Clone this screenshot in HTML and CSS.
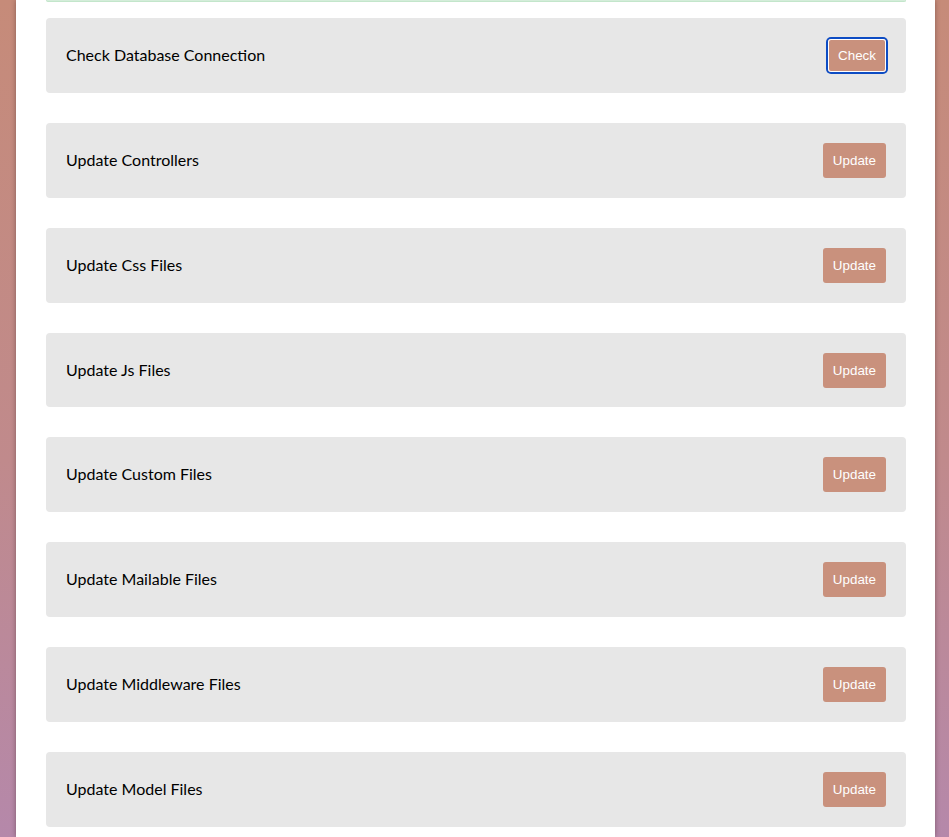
FILE: index.html
```html
<!DOCTYPE html>
<html lang="en">
<head>
<meta charset="utf-8">
<title>Updater</title>
<link rel="stylesheet" href="styles.css">
</head>
<body>
<div class="page">
  <div class="alert-success"></div>
  <div class="list">
    <div class="row"><span class="label">Check Database Connection</span><button class="btn btn-focus">Check</button></div>
    <div class="row"><span class="label">Update Controllers</span><button class="btn">Update</button></div>
    <div class="row"><span class="label">Update Css Files</span><button class="btn">Update</button></div>
    <div class="row"><span class="label">Update Js Files</span><button class="btn">Update</button></div>
    <div class="row"><span class="label">Update Custom Files</span><button class="btn">Update</button></div>
    <div class="row"><span class="label">Update Mailable Files</span><button class="btn">Update</button></div>
    <div class="row"><span class="label">Update Middleware Files</span><button class="btn">Update</button></div>
    <div class="row"><span class="label">Update Model Files</span><button class="btn">Update</button></div>
  </div>
</div>
</body>
</html>
```
FILE: styles.css
```css
html, body {
  margin: 0;
  padding: 0;
}
body {
  min-height: 837px;
  background: linear-gradient(to bottom, #c68b79 0%, #c08a8c 55%, #b588aa 100%);
  font-family: Lato, "Noto Sans", sans-serif;
  overflow: hidden;
}
.page {
  margin: 0 14px 0 16px;
  background: #ffffff;
  min-height: 837px;
  padding: 0 29px 0 30px;
  box-shadow: 0 0 5px rgba(60, 30, 30, 0.45);
}
.alert-success {
  height: 1px;
  background: #d4edda;
  border: 1px solid #c3e6cb;
  border-top: none;
  border-radius: 0 0 4px 4px;
}
.list {
  display: flex;
  flex-direction: column;
  gap: 30px;
  padding-top: 16px;
}
.row {
  box-sizing: border-box;
  height: 74.86px;
  background: #e7e7e7;
  border-radius: 4px;
  padding: 0 20px;
  display: flex;
  align-items: center;
  justify-content: space-between;
}
.label {
  font-size: 16px;
  color: #000000;
  margin-bottom: 2px;
}
.btn {
  font-family: "Liberation Sans", Arial, sans-serif;
  font-size: 13.4px;
  color: #ffffff;
  background: #c9917d;
  border: none;
  border-radius: 3px;
  height: 35px;
  padding: 0 10px;
  cursor: pointer;
}
.btn-focus {
  height: 33px;
  margin-right: 0;
  box-shadow: inset 0 0 0 1px #ffffff, 0 0 0 2px #0d4cc4;
}
```
